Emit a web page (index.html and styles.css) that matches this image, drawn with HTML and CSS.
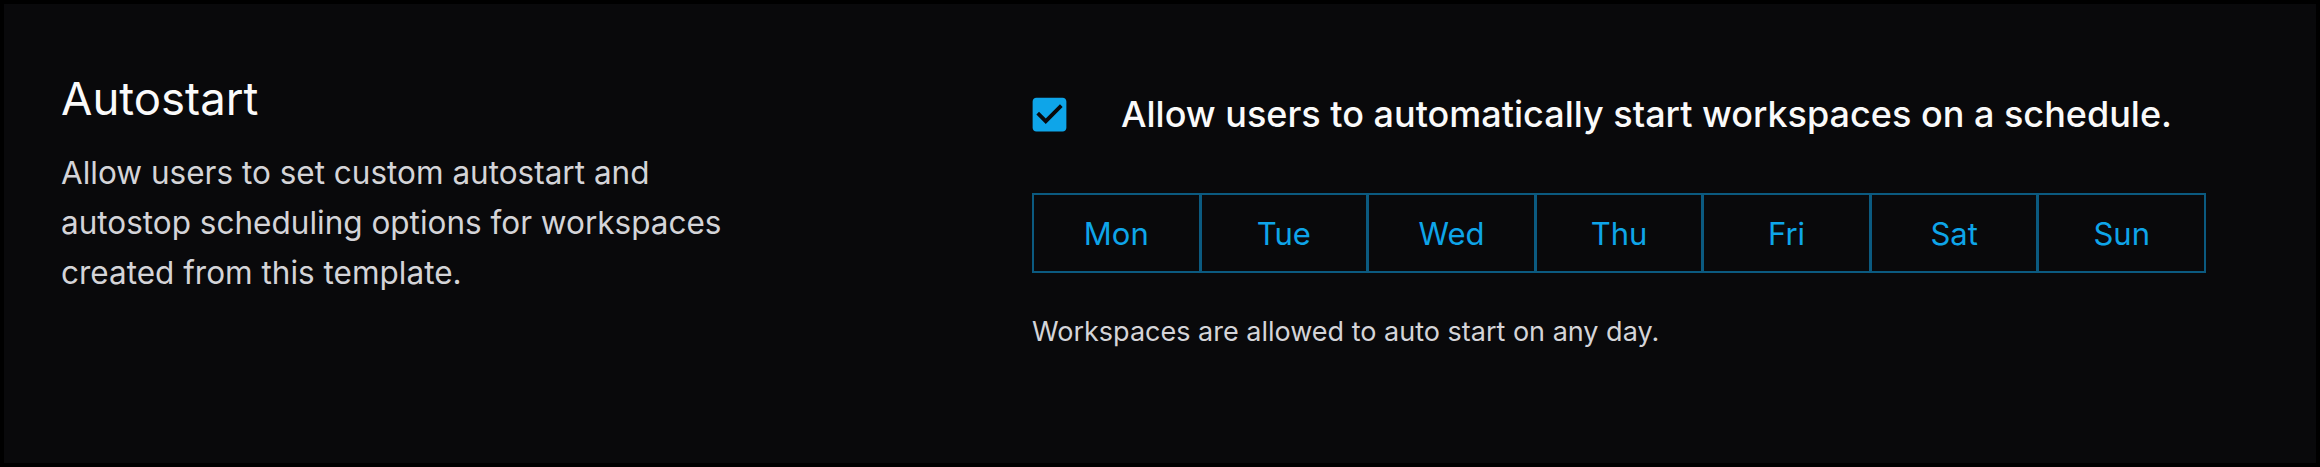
FILE: index.html
```html
<!DOCTYPE html>
<html lang="en">
<head>
<meta charset="utf-8">
<title>Autostart</title>
<link rel="stylesheet" href="styles.css">
</head>
<body>
<div class="frame">
  <section class="section">
    <div class="intro">
      <h2 class="title">Autostart</h2>
      <p class="desc">Allow users to set custom autostart and autostop scheduling options for workspaces created from this template.</p>
    </div>
    <div class="controls">
      <label class="check-row">
        <svg class="check" viewBox="0 0 24 24" width="45" height="45" aria-hidden="true"><path d="M19 3H5c-1.11 0-2 .9-2 2v14c0 1.1.89 2 2 2h14c1.11 0 2-.9 2-2V5c0-1.1-.89-2-2-2zm-9 14l-5-5 1.41-1.41L10 14.17l7.59-7.59L19 8l-9 9z"/></svg>
        <span class="check-label">Allow users to automatically start workspaces on a schedule.</span>
      </label>
      <div class="days">
        <button class="day">Mon</button>
        <button class="day">Tue</button>
        <button class="day">Wed</button>
        <button class="day">Thu</button>
        <button class="day">Fri</button>
        <button class="day">Sat</button>
        <button class="day">Sun</button>
      </div>
      <p class="helper">Workspaces are allowed to auto start on any day.</p>
    </div>
  </section>
</div>
</body>
</html>
```

FILE: styles.css
```css
* { box-sizing: border-box; }
html, body {
  margin: 0;
  padding: 0;
  background: #000;
}
body {
  padding: 4px;
  font-family: Inter, "Noto Sans", sans-serif;
}
.frame {
  height: 459px;
  background: #09090b;
  overflow: hidden;
}
.section {
  display: flex;
  align-items: flex-start;
  padding: 0 110px 0 57px;
}
.intro {
  width: 971px;
  flex: none;
  padding-top: 68px;
}
.title {
  margin: 0;
  font-size: 45.5px;
  line-height: 53px;
  font-weight: 400;
  color: #fafafa;
}
.desc {
  margin: 23px 0 0;
  width: 690px;
  font-size: 31.5px;
  line-height: 50px;
  color: #d4d4d8;
}
.controls {
  flex: 1;
  padding-top: 88px;
}
.check-row {
  display: flex;
  align-items: center;
  margin-left: -5px;
}
.check {
  display: block;
  fill: #0ea5e9;
  flex: none;
}
.check-label {
  margin-left: 49px;
  font-size: 36px;
  line-height: 41px;
  font-weight: 500;
  color: #fafafa;
}
.days {
  display: flex;
  margin-top: 56px;
}
.day {
  flex: 1;
  height: 80px;
  margin: 0;
  padding: 0;
  background: transparent;
  border: 2px solid #0b5a80;
  margin-left: -1px;
  font-family: inherit;
  font-size: 31px;
  font-weight: 400;
  color: #0ea5e9;
}
.day:first-child { margin-left: 0; }
.helper {
  margin: 39px 0 0;
  font-size: 27px;
  line-height: 39px;
  color: #d4d4d8;
}
```
